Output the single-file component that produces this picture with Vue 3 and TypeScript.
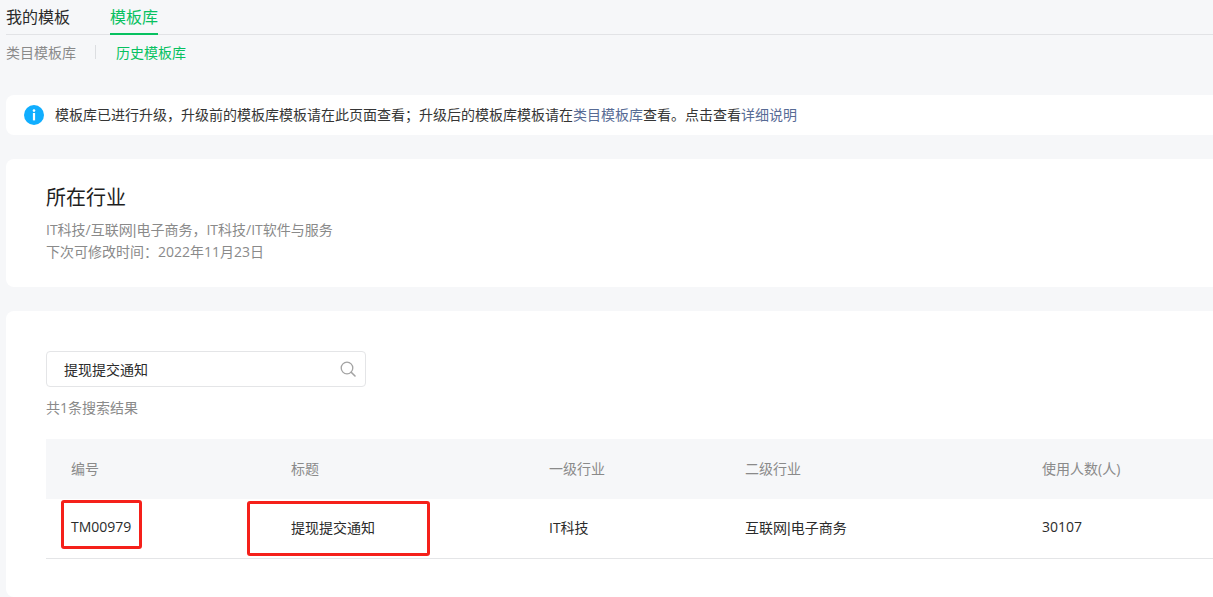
<script setup lang="ts">
interface Column { key: string; label: string; width: number }
const columns: Column[] = [
  { key: 'id', label: '编号', width: 220 },
  { key: 'title', label: '标题', width: 258 },
  { key: 'first', label: '一级行业', width: 196 },
  { key: 'second', label: '二级行业', width: 297 },
  { key: 'users', label: '使用人数(人)', width: 220 },
]
const row: Record<string, string> = {
  id: 'TM00979',
  title: '提现提交通知',
  first: 'IT科技',
  second: '互联网|电子商务',
  users: '30107',
}
</script>

<template>
  <div class="page">
    <nav class="tabs">
      <a class="tab">我的模板</a>
      <a class="tab active">模板库</a>
    </nav>
    <div class="subtabs">
      <span class="sub">类目模板库</span>
      <i class="sep"></i>
      <span class="sub on">历史模板库</span>
    </div>

    <div class="alert">
      <svg class="info" width="20" height="20" viewBox="0 0 20 20">
        <circle cx="10" cy="10" r="10" fill="#10aeff" />
        <circle cx="10" cy="5.6" r="1.3" fill="#fff" />
        <rect x="8.9" y="8" width="2.2" height="7.4" fill="#fff" />
      </svg>
      <span class="alert-text">模板库已进行升级，升级前的模板库模板请在此页面查看；升级后的模板库模板请在<a class="link">类目模板库</a>查看。点击查看<a class="link">详细说明</a></span>
    </div>

    <section class="card industry">
      <h2>所在行业</h2>
      <p>IT科技/互联网<span class="pipe">|</span>电子商务，IT科技/IT软件与服务</p>
      <p>下次可修改时间：2022年11月23日</p>
    </section>

    <section class="card result">
      <div class="search">
        <span>提现提交通知</span>
        <svg width="16" height="16" viewBox="0 0 16 16" fill="none" stroke="#a3a3a3" stroke-width="1.3">
          <circle cx="7" cy="7" r="5.8" />
          <path d="M11.2 11.2 15 15" stroke-linecap="round" stroke-width="1.6" />
        </svg>
      </div>
      <div class="count">共1条搜索结果</div>
      <div class="table">
        <div class="thead">
          <div v-for="c in columns" :key="c.key" class="cell" :style="{ width: c.width + 'px' }">{{ c.label }}</div>
        </div>
        <div class="tbody">
          <div v-for="c in columns" :key="c.key" class="cell" :style="{ width: c.width + 'px' }">
            <template v-if="c.key === 'second'">{{ row.second.split('|')[0] }}<span class="pipe">|</span>{{ row.second.split('|')[1] }}</template>
            <template v-else>{{ row[c.key] }}</template>
          </div>
        </div>
        <div class="mark mark-id"></div>
        <div class="mark mark-title"></div>
      </div>
    </section>
  </div>
</template>

<style>
html, body { margin: 0; background: #f6f7f9; overflow: hidden; }
</style>

<style scoped>
.page {
  width: 1213px;
  height: 597px;
  box-sizing: border-box;
  padding-left: 6px;
  overflow: hidden;
  background: #f6f7f9;
  font-family: "Open Sans", "Noto Sans CJK SC", sans-serif;
  font-size: 14px;
  color: #353535;
}
.tabs {
  display: flex;
  gap: 40px;
  height: 35px;
  box-sizing: border-box;
  border-bottom: 1px solid #e2e3e6;
}
.tab {
  height: 35px;
  box-sizing: border-box;
  font-size: 16px;
  line-height: 34px;
  color: #2b2b2b;
}
.tab.active {
  color: #07c160;
  border-bottom: 2px solid #07c160;
}
.subtabs {
  display: flex;
  align-items: center;
  height: 22px;
  margin-top: 6px;
  color: #8a8a8a;
}
.sub.on { color: #07c160; }
.sep {
  width: 1px;
  height: 14px;
  margin: 0 20px 0 19px;
  background: #dcdee1;
}
.alert {
  display: flex;
  align-items: center;
  gap: 11px;
  height: 40px;
  margin-top: 32px;
  padding-left: 18px;
  background: #fff;
  border-radius: 8px 0 0 8px;
  font-size: 14px;
  color: #353535;
  white-space: nowrap;
}
.alert-text { margin-bottom: 2px; }
.info { flex: none; }
.link { color: #576b95; }
.pipe { font-family: "Liberation Sans", sans-serif; }
.card {
  background: #fff;
  border-radius: 8px 0 0 8px;
  padding-left: 40px;
}
.industry {
  height: 128px;
  box-sizing: border-box;
  margin-top: 24px;
  padding-top: 23px;
}
.industry h2 {
  margin: 0 0 5px;
  font-size: 20px;
  font-weight: 400;
  line-height: 32px;
  color: #1f1f1f;
}
.industry p {
  margin: 0;
  line-height: 22px;
  color: #8a8a8a;
}
.result {
  height: 286px;
  box-sizing: border-box;
  margin-top: 24px;
  padding-top: 40px;
}
.search {
  display: flex;
  align-items: center;
  justify-content: space-between;
  width: 320px;
  height: 36px;
  box-sizing: border-box;
  padding: 0 9px 0 17px;
  border: 1px solid #e4e5e7;
  border-radius: 4px;
  color: #2b2b2b;
}
.count {
  margin-top: 10px;
  margin-bottom: 20px;
  line-height: 22px;
  color: #8a8a8a;
}
.table {
  position: relative;
  width: 1167px;
}
.thead, .tbody {
  display: flex;
  box-sizing: border-box;
  padding-left: 25px;
}
.thead {
  height: 60px;
  padding-bottom: 2px;
  align-items: center;
  background: #f6f7f9;
  color: #8a8a8a;
}
.tbody {
  height: 60px;
  padding-bottom: 4px;
  align-items: center;
  border-bottom: 1px solid #e4e5e7;
  color: #2b2b2b;
}
.cell { flex: none; }
.mark {
  position: absolute;
  box-sizing: border-box;
  border: 3px solid #f5201a;
  border-radius: 3px;
}
.mark-id { left: 15px; top: 61px; width: 81px; height: 49px; }
.mark-title { left: 201px; top: 62px; width: 183px; height: 55px; }
</style>
